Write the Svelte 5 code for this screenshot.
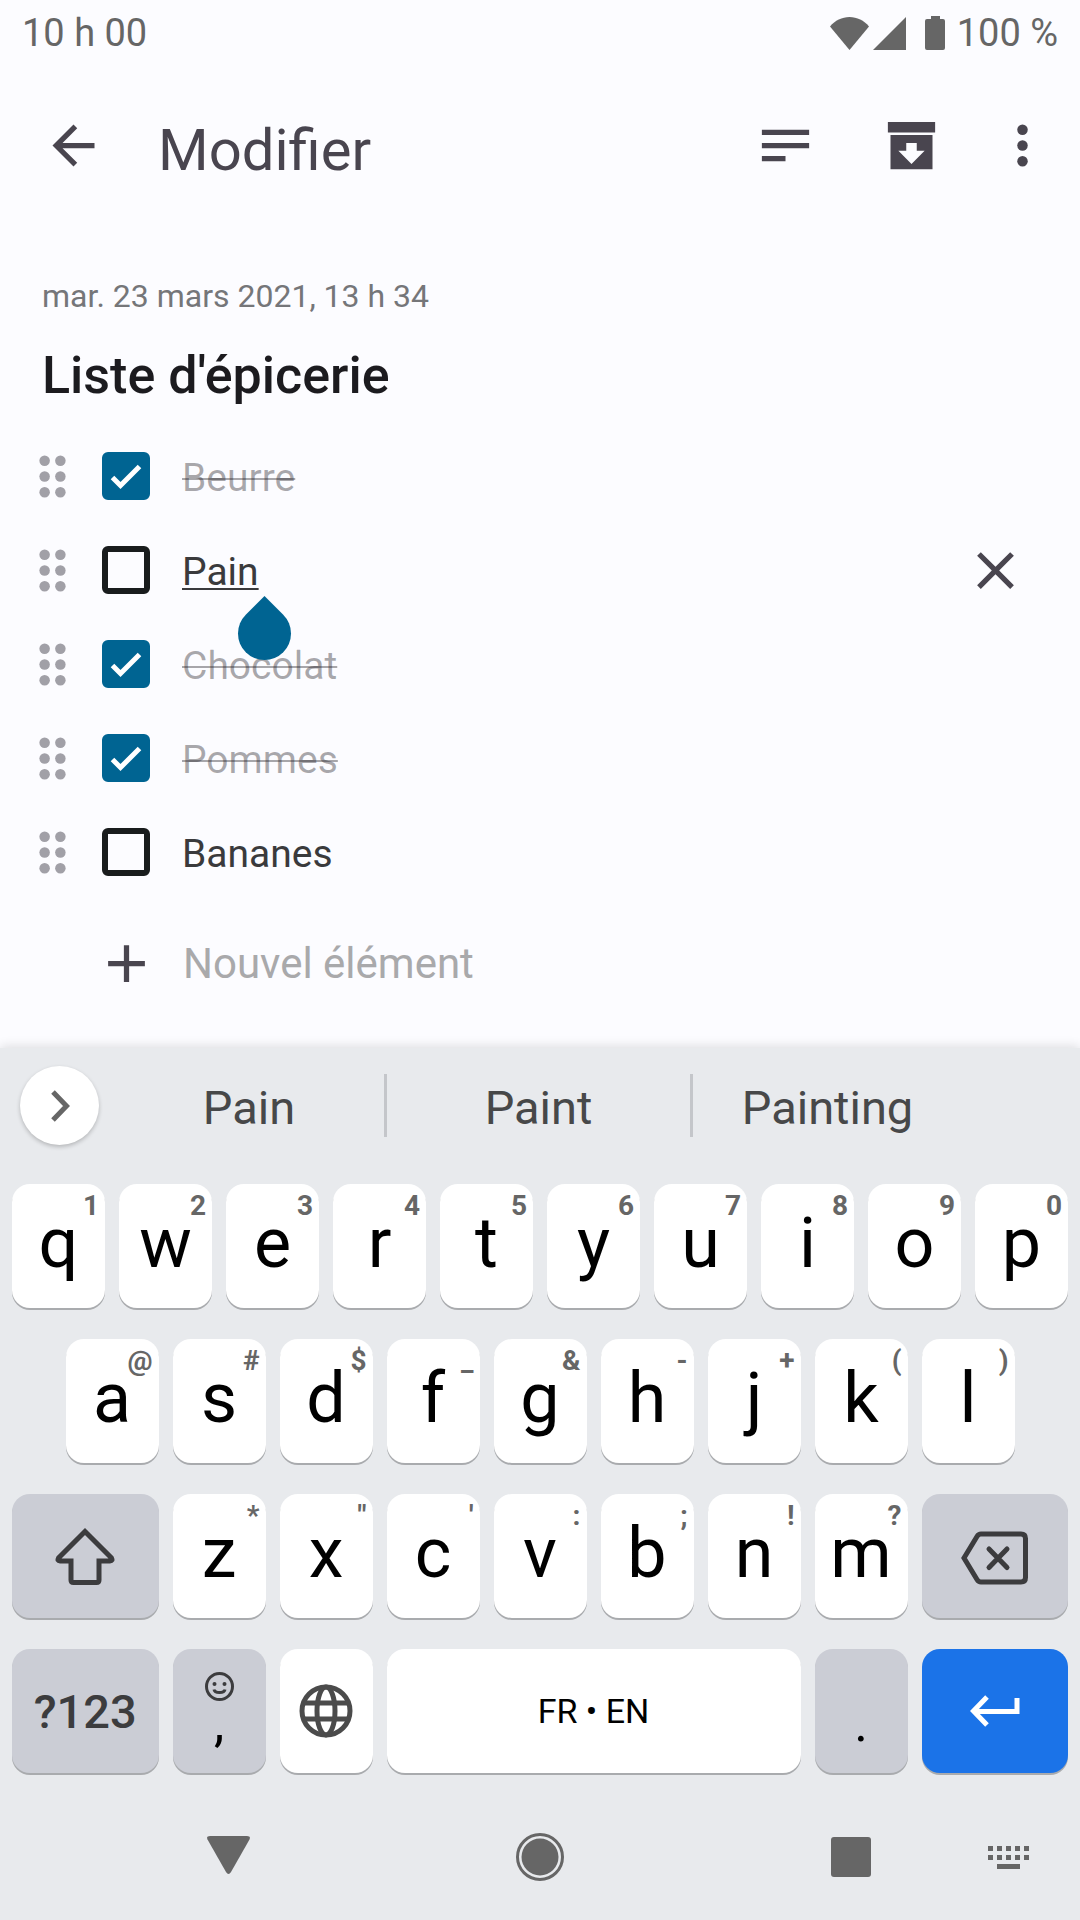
<script lang="ts">
  type Item = { text: string; done: boolean; editing?: boolean };
  type Key = { label: string; hint: string };

  let items = $state<Item[]>([
    { text: 'Beurre', done: true },
    { text: 'Pain', done: false, editing: true },
    { text: 'Chocolat', done: true },
    { text: 'Pommes', done: true },
    { text: 'Bananes', done: false },
  ]);
  let title = $state("Liste d'épicerie");
  let newItem = $state('');

  const suggestions = ['Pain', 'Paint', 'Painting'];

  const toKeys = (letters: string, hints: string): Key[] =>
    [...letters].map((label, i) => ({ label, hint: hints[i] }));

  const row1 = toKeys('qwertyuiop', '1234567890');
  const row2 = toKeys('asdfghjkl', '@#$_&-+()');
  const row3 = toKeys('zxcvbnm', '*"\':;!?');

  const dots = [6, 12, 18];
  const keyCols = [0, 1, 2, 3, 4];
</script>

{#snippet letterKeys(keys: Key[])}
  {#each keys as key}
    <button class="key" type="button">
      <span class="letter">{key.label}</span>
      <span class="hint">{key.hint}</span>
    </button>
  {/each}
{/snippet}

<div class="screen">
  <header>
    <div class="status">
      <span>10 h 00</span>
      <div class="indicators">
        <svg class="wifi" viewBox="0 0 39 33" aria-hidden="true"><path d="M19.500 33 0 9.500C5 3.500 12 0 19.500 0S34 3.500 39 9.500Z" /></svg>
        <svg class="signal" viewBox="0 0 33 33" aria-hidden="true"><path d="M33 0V33H0Z" /></svg>
        <svg class="battery" viewBox="0 0 20 34" aria-hidden="true"><path d="M6 0h9v3h3q2 0 2 2v27q0 2-2 2H2q-2 0-2-2V5q0-2 2-2h4Z" /></svg>
        <span>100 %</span>
      </div>
    </div>
    <div class="appbar">
      <button class="back" type="button" aria-label="Retour">
        <svg class="icon" viewBox="0 0 24 24"><path d="M20 11H7.830l5.590-5.590L12 4l-8 8 8 8 1.410-1.410L7.830 13H20Z" /></svg>
      </button>
      <h1>Modifier</h1>
      <button class="action" type="button" aria-label="Type de note">
        <svg class="icon" viewBox="0 0 24 24"><path d="M3 6h18v2H3ZM3 11h18v2H3ZM3 16h9v2H3Z" /></svg>
      </button>
      <button class="action" type="button" aria-label="Archiver">
        <svg class="icon" viewBox="0 0 24 24"><path fill-rule="evenodd" d="M3 3h18v4H3ZM4 8h16v13H4ZM10 11v3H7l5 5 5-5h-3v-3Z" /></svg>
      </button>
      <button class="action more" type="button" aria-label="Plus d'options">
        <svg class="icon" viewBox="0 0 24 24">
          {#each dots as y}<circle cx="12" cy={y} r="2" />{/each}
        </svg>
      </button>
    </div>
  </header>

  <main>
    <p class="date">mar. 23 mars 2021, 13 h 34</p>
    <input class="title" aria-label="Titre" bind:value={title} />
    <ul>
      {#each items as item, i}
        <li>
          <svg class="icon grip" viewBox="0 0 24 24" aria-hidden="true">
            {#each dots as y}<circle cx="9" cy={y} r="2" /><circle cx="15" cy={y} r="2" />{/each}
          </svg>
          <label class="check">
            <input type="checkbox" bind:checked={item.done} aria-labelledby="item-{i}" />
            {#if item.done}
              <svg viewBox="0 0 48 48" aria-hidden="true"><path d="M10.500 25.500 18.500 33.500 37.500 14.500" /></svg>
            {/if}
          </label>
          <input
            id="item-{i}"
            class="item"
            class:done={item.done}
            class:editing={item.editing}
            aria-label={item.text}
            bind:value={item.text}
          />
          {#if item.editing}
            <button class="remove" type="button" aria-label="Supprimer">
              <svg class="icon" viewBox="0 0 24 24"><path d="M19 6.410 17.590 5 12 10.590 6.410 5 5 6.410 10.590 12 5 17.590 6.410 19 12 13.410 17.590 19 19 17.590 13.410 12Z" /></svg>
            </button>
            <span class="caret-handle"></span>
          {/if}
        </li>
      {/each}
    </ul>
    <div class="new-row">
      <svg class="icon" viewBox="0 0 24 24" aria-hidden="true"><path d="M19 13h-6v6h-2v-6H5v-2h6V5h2v6h6Z" /></svg>
      <input class="new-item" aria-label="Nouvel élément" placeholder="Nouvel élément" bind:value={newItem} />
    </div>
  </main>

  <section class="keyboard" aria-label="Clavier">
    <div class="strip">
      <button class="expand" type="button" aria-label="Plus d'outils">
        <svg viewBox="0 0 32 32"><path d="M9 2 22.500 16 9 30" /></svg>
      </button>
      {#each suggestions as word}
        <button class="word" type="button">{word}</button>
      {/each}
    </div>

    <div class="keys">
      {@render letterKeys(row1)}
      <span class="indent"></span>
      {@render letterKeys(row2)}
      <span class="indent"></span>
      <button class="key wide grey" type="button" aria-label="Majuscule">
        <svg class="shift" viewBox="0 0 60 58"><path d="M30 4.500 3.500 31Q2 34 5 34H16V53Q16 55.500 18.500 55.500H41.500Q44 55.500 44 53V34H55Q58 34 56.500 31Z" /></svg>
      </button>
      {@render letterKeys(row3)}
      <button class="key wide grey" type="button" aria-label="Effacer">
        <svg class="erase" viewBox="0 0 68 58"><path d="M20 7H60Q64.500 7 64.500 11.500V50.500Q64.500 55 60 55H20Q17.500 55 16 52.500L3 31 16 9.500Q17.500 7 20 7Z" /><path stroke-linecap="round" d="M28 22 46 40.500M46 22 28 40.500" /></svg>
      </button>
      <button class="key wide grey symbols" type="button">?123</button>
      <button class="key grey punct" type="button" aria-label="Virgule">
        <svg class="smiley" viewBox="0 0 29 29"><circle cx="14.500" cy="14.500" r="13" /><path d="M9 17.500Q9.500 20.500 14.500 20.500T20 17.500" /><g><circle cx="9.500" cy="12" r="2" /><circle cx="19.500" cy="12" r="2" /></g></svg>
        <span>,</span>
      </button>
      <button class="key" type="button" aria-label="Changer de langue">
        <svg class="globe" viewBox="0 0 54 54"><circle cx="27" cy="27" r="24" /><ellipse cx="27" cy="27" rx="9" ry="24" /><path d="M4.500 19H49.500M4.500 35H49.500" /></svg>
      </button>
      <button class="key space" type="button">FR • EN</button>
      <button class="key grey punct" type="button"><span>.</span></button>
      <button class="key wide enter" type="button" aria-label="Entrée">
        <svg viewBox="0 0 50 32"><path d="M17 2 3.500 16 17 30M4 16.500H47V3" /></svg>
      </button>
    </div>

    <nav aria-label="Système">
      <button type="button" aria-label="Retour système">
        <svg class="nav-back" viewBox="0 0 43 42"><path d="M3 0H40Q44 0 42.500 3.500L24 36Q21.500 40 19 36L.500 3.500Q-1 0 3 0Z" /></svg>
      </button>
      <button type="button" aria-label="Accueil">
        <svg class="nav-home" viewBox="0 0 48 48"><circle class="ring" cx="24" cy="24" r="22.500" /><circle cx="24" cy="24" r="18.500" /></svg>
      </button>
      <button type="button" aria-label="Applications récentes"><span class="nav-recent"></span></button>
      <button type="button" aria-label="Choisir le clavier">
        <svg class="nav-keyboard" viewBox="0 0 41 24">
          {#each keyCols as c}
            <rect x={c * 9} y="1" width="5" height="5" />
            <rect x={c * 9} y="10" width="5" height="5" />
          {/each}
          <rect x="9" y="19" width="23" height="5" />
        </svg>
      </button>
    </nav>
  </section>
</div>

<style>
  :global(body) {
    margin: 0;
    background: #fcfcff;
  }

  .screen {
    min-height: 100vh;
    display: flex;
    flex-direction: column;
    font-family: Roboto, sans-serif;
    color: #191c1d;
  }

  button {
    margin: 0;
    padding: 0;
    border: 0;
    background: none;
    color: inherit;
    font: inherit;
    cursor: pointer;
    display: flex;
    align-items: center;
    justify-content: center;
  }

  input {
    box-sizing: border-box;
    margin: 0;
    padding: 0;
    border: 0;
    outline: 0;
    background: none;
    color: inherit;
    font: inherit;
    min-width: 0;
  }

  svg {
    display: block;
    flex: none;
    fill: currentColor;
  }

  .icon {
    width: 63px;
    height: 63px;
  }

  /* Status and app bars */
  .status {
    height: 66px;
    padding: 0 22px;
    display: flex;
    align-items: center;
    justify-content: space-between;
    color: #666;
    font-size: 38px;
    line-height: 66px;
  }

  .indicators {
    display: flex;
    align-items: center;
  }

  .wifi {
    width: 39px;
    height: 33px;
    margin-right: 4px;
  }

  .signal {
    width: 33px;
    height: 33px;
    margin-right: 19px;
  }

  .battery {
    width: 20px;
    height: 34px;
    margin-right: 12px;
  }

  .appbar {
    height: 159px;
    padding: 0 10px 0 42px;
    display: flex;
    align-items: center;
    color: #49454f;
  }

  h1 {
    flex: 1;
    margin: 0;
    padding: 8px 0 0 53px;
    font-size: 58px;
    font-weight: 400;
    line-height: 64px;
  }

  .action {
    width: 126px;
    height: 126px;
  }

  .more {
    width: 96px;
  }

  /* Note */
  main {
    flex: 1;
    padding-top: 51px;
  }

  .date {
    margin: 0 42px 27px;
    color: #757679;
    font-size: 32px;
    line-height: 40px;
  }

  .title {
    display: block;
    width: calc(100% - 84px);
    height: 64px;
    margin: 0 42px 22px;
    font-size: 52px;
    font-weight: 500;
    color: #1c1b1f;
  }

  ul {
    margin: 0;
    padding: 0;
    list-style: none;
  }

  li {
    position: relative;
    height: 94px;
    padding: 0 53px 0 21px;
    display: flex;
    align-items: center;
  }

  .grip {
    color: #a1a0a7;
  }

  .check {
    display: grid;
    flex: none;
    width: 48px;
    height: 48px;
    margin: 0 32px 0 18px;
  }

  .check > * {
    grid-area: 1 / 1;
  }

  .check input {
    appearance: none;
    width: 48px;
    height: 48px;
    border: 6px solid #191c1d;
    border-radius: 6px;
  }

  .check input:checked {
    border-color: #006492;
    background: #006492;
  }

  .check svg {
    width: 48px;
    height: 48px;
    fill: none;
    stroke: #fff;
    stroke-width: 5;
    pointer-events: none;
  }

  .item {
    flex: 1;
    height: 64px;
    padding-top: 4px;
    font-size: 39px;
    color: #3a3a3c;
  }

  .done {
    color: rgba(28, 27, 31, 0.38);
    text-decoration: line-through 2px;
  }

  .editing {
    text-decoration: underline 2px;
    text-underline-offset: 3px;
  }

  .remove {
    color: #49454f;
  }

  /* Text cursor grip hanging below the edited word */
  .caret-handle {
    position: absolute;
    z-index: 1;
    left: 238px;
    top: 84px;
    width: 53px;
    height: 53px;
    border-radius: 0 50% 50% 50%;
    background: #006492;
    transform: rotate(45deg);
  }

  .new-row {
    height: 128px;
    padding: 0 53px 0 95px;
    display: flex;
    align-items: center;
    gap: 25px;
    color: #49454f;
  }

  .new-item {
    flex: 1;
    height: 64px;
    font-size: 42px;
  }

  .new-item::placeholder {
    color: #a9a9ab;
    opacity: 1;
  }

  /* Keyboard */
  .keyboard {
    position: relative;
    background: #e8eaed;
    box-shadow: 0 -2px 10px rgba(0, 0, 0, 0.12);
  }

  .strip {
    height: 115px;
    padding: 0 118px 21px 20px;
    display: grid;
    grid-template-columns: 94px 273fr 306fr 269fr;
    align-items: center;
    color: #474849;
    font-size: 47px;
  }

  .expand {
    width: 79px;
    height: 79px;
    border-radius: 50%;
    background: #fff;
    color: #666;
    box-shadow: 0 2px 4px rgba(0, 0, 0, 0.22);
  }

  .expand svg {
    width: 32px;
    height: 32px;
    fill: none;
    stroke: currentColor;
    stroke-width: 5;
  }

  .word {
    height: 63px;
    padding-top: 4px;
    box-sizing: border-box;
  }

  .word:not(:last-child) {
    border-right: 3px solid #c4c6ca;
  }

  .keys {
    padding: 0 12px 21px;
    display: grid;
    grid-template-columns: repeat(20, minmax(0, 1fr));
    grid-auto-rows: 124px;
    gap: 31px 14px;
  }

  .key {
    position: relative;
    grid-column: span 2;
    border-radius: 18px;
    background: #fff;
    box-shadow: 0 2px 0 #a9abae;
    color: #000;
  }

  .wide {
    grid-column: span 3;
  }

  .grey {
    background: #cbcdd5;
    color: #3c3c3e;
  }

  .space {
    grid-column: span 8;
    font-size: 34px;
  }

  .enter {
    background: #1b73e8;
    color: #fff;
  }

  .letter {
    padding-bottom: 6px;
    font-size: 70px;
    line-height: 80px;
  }

  .hint {
    position: absolute;
    top: 6px;
    right: 6px;
    color: #666;
    font-size: 28px;
    font-weight: 700;
    line-height: 32px;
  }

  .symbols {
    font-size: 47px;
    font-weight: 500;
  }

  .punct {
    flex-direction: column;
    justify-content: flex-end;
    padding-bottom: 26px;
  }

  .punct span {
    color: #000;
    font-size: 52px;
    line-height: 46px;
  }

  .smiley,
  .shift,
  .erase,
  .globe,
  .enter svg {
    fill: none;
    stroke: currentColor;
    stroke-width: 5;
  }

  .smiley {
    width: 29px;
    height: 29px;
    stroke-width: 3;
  }

  .smiley g {
    fill: currentColor;
    stroke: none;
  }

  .shift {
    width: 60px;
    height: 58px;
  }

  .erase {
    width: 68px;
    height: 58px;
  }

  .globe {
    width: 54px;
    height: 54px;
    color: #4b4b4b;
  }

  .enter svg {
    width: 50px;
    height: 32px;
  }

  nav {
    height: 126px;
    display: grid;
    grid-template-columns: 156fr 144fr 168fr 144fr 167fr 144fr 13fr 144fr;
    color: #666;
  }

  nav button:nth-child(1) {
    grid-column: 2;
  }

  nav button:nth-child(2) {
    grid-column: 4;
  }

  nav button:nth-child(3) {
    grid-column: 6;
  }

  nav button:nth-child(4) {
    grid-column: 8;
  }

  .nav-back {
    width: 43px;
    height: 42px;
  }

  .nav-home {
    width: 48px;
    height: 48px;
  }

  .ring {
    fill: none;
    stroke: currentColor;
    stroke-width: 3;
  }

  .nav-recent {
    width: 40px;
    height: 40px;
    border-radius: 3px;
    background: currentColor;
  }

  .nav-keyboard {
    width: 41px;
    height: 24px;
  }
</style>
